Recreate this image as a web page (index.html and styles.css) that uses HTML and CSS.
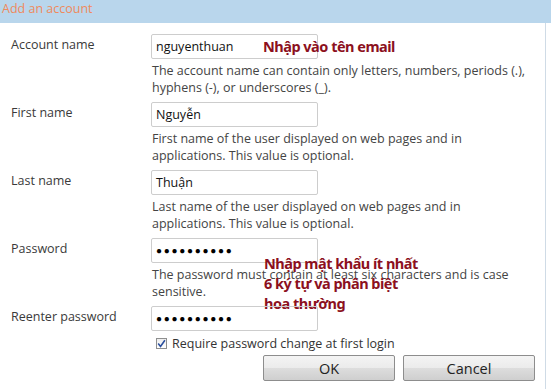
FILE: index.html
```html
<!DOCTYPE html>
<html lang="en">
<head>
    <meta charset="UTF-8">
    <title>Add an account</title>
    <link rel="stylesheet" href="styles.css">
</head>
<body>
    <div class="dialog">
        <!-- Title bar -->
        <div class="title">Add an account</div>

        <!-- Form -->
        <div class="form">
            <div class="row">
                <label>Account name</label>
                <div class="field">
                    <div class="input">nguyenthuan</div>
                    <p class="hint">The account name can contain only letters, numbers, periods (.),<br>hyphens (-), or underscores (_).</p>
                    <span class="note note-email">Nhập vào tên email</span>
                </div>
            </div>

            <div class="row">
                <label>First name</label>
                <div class="field">
                    <div class="input">Nguyễn</div>
                    <p class="hint">First name of the user displayed on web pages and in<br>applications. This value is optional.</p>
                </div>
            </div>

            <div class="row">
                <label>Last name</label>
                <div class="field">
                    <div class="input">Thuận</div>
                    <p class="hint">Last name of the user displayed on web pages and in<br>applications. This value is optional.</p>
                </div>
            </div>

            <div class="row">
                <label>Password</label>
                <div class="field">
                    <div class="input dots">●●●●●●●●●●</div>
                    <p class="hint">The password must contain at least six characters and is case<br>sensitive.</p>
                    <span class="note note-pass">Nhập mật khẩu ít nhất<br>6 ký tự và phân biệt<br>hoa thường</span>
                </div>
            </div>

            <div class="row last">
                <label>Reenter password</label>
                <div class="field">
                    <div class="input dots">●●●●●●●●●●</div>
                    <div class="check">
                        <span class="box">
                            <svg width="9" height="9" viewBox="0 0 9 9"><path d="M1.2 4.6 L3.5 7.4 L7.9 1.2" fill="none" stroke="#2a4f9e" stroke-width="1.6"/></svg>
                        </span>
                        Require password change at first login
                    </div>
                </div>
            </div>

            <div class="actions">
                <button>OK</button>
                <button>Cancel</button>
            </div>
        </div>
    </div>
</body>
</html>
```

FILE: styles.css
```css
/* General */
body {
    margin: 0;
    background-color: #ffffff;
    font-family: "Open Sans", "Noto Sans", sans-serif;
    color: #333333;
}

/* Title bar */
.title {
    height: 23px;
    background-color: #b9d6ec;
    color: #ef8a5c;
    font-size: 12.5px;
    line-height: 18px;
    padding-left: 2px;
}

/* Form */
.form {
    width: 546px;
    height: 366px;
    border-right: 1px solid #cfdbe6;
    padding-top: 11px;
    box-sizing: border-box;
}

.row {
    display: flex;
    margin-bottom: 6px;
}

.row.last {
    margin-bottom: 0;
}

.row label {
    width: 140px;
    padding-left: 11px;
    padding-top: 2px;
    font-size: 12.5px;
    color: #3a3a3a;
}

.field {
    position: relative;
}

.input {
    width: 167px;
    height: 25px;
    box-sizing: border-box;
    border: 1px solid #cdcdcd;
    border-radius: 2px;
    padding: 0 0 0 4px;
    font-size: 12.5px;
    line-height: 23px;
    color: #111111;
}

.input.dots {
    font-size: 10px;
    letter-spacing: 1.7px;
    color: #000000;
}

.hint {
    margin: 3px 0 0 1px;
    font-size: 12.5px;
    line-height: 17px;
    color: #444444;
}

/* Red annotations */
.note {
    position: absolute;
    font-family: "Noto Sans", sans-serif;
    font-weight: bold;
    font-size: 14.5px;
    letter-spacing: -0.5px;
    color: #8c1020;
}

.note-email {
    left: 112px;
    top: 2px;
}

.note-pass {
    left: 113px;
    top: 15px;
    line-height: 20px;
}

/* Checkbox */
.check {
    display: flex;
    align-items: center;
    gap: 5px;
    margin: 4px 0 0 5px;
    font-size: 12.5px;
    color: #333333;
}

.check .box {
    width: 11px;
    height: 11px;
    box-sizing: border-box;
    border: 1px solid #8e8f8f;
    background: linear-gradient(#eeeeee, #ffffff);
    display: flex;
    align-items: center;
    justify-content: center;
}

/* Buttons */
.actions {
    display: flex;
    gap: 8px;
    margin: 3px 0 0 263px;
}

.actions button {
    width: 132px;
    height: 26px;
    border: 1px solid #8d8d8d;
    border-radius: 2px;
    background: linear-gradient(#f4f4f4 0%, #ebebeb 50%, #dddddd 51%, #cfcfcf 100%);
    font-family: "Open Sans", "Noto Sans", sans-serif;
    font-size: 14.5px;
    color: #222222;
    padding: 0;
}
```
